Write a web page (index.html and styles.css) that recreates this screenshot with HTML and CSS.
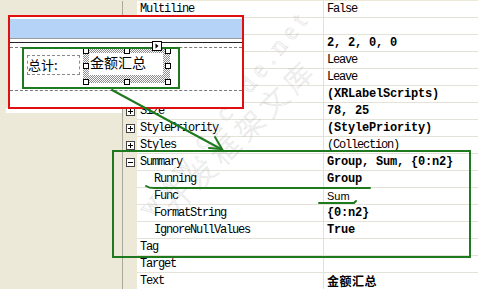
FILE: index.html
```html
<!DOCTYPE html>
<html>
<head>
<meta charset="utf-8">
<link rel="stylesheet" href="styles.css">
</head>
<body>
<div class="page">
  <div class="leftpane"></div>
  <div class="grid">
    <div class="row"><div class="gut"></div><div class="name">Multiline</div><div class="val">False</div></div>
    <div class="row"><div class="gut"></div><div class="name">NullValueText</div><div class="val"></div></div>
    <div class="row"><div class="gut"><svg class="pm" width="9" height="9"><rect x=".5" y=".5" width="8" height="8" fill="#fff" stroke="#444"/><path d="M2 4.5h5M4.5 2v5" stroke="#000"/></svg></div><div class="name">Padding</div><div class="val b">2, 2, 0, 0</div></div>
    <div class="row"><div class="gut"></div><div class="name">ProcessDuplicates</div><div class="val">Leave</div></div>
    <div class="row"><div class="gut"></div><div class="name">ProcessNullValues</div><div class="val">Leave</div></div>
    <div class="row"><div class="gut"><svg class="pm" width="9" height="9"><rect x=".5" y=".5" width="8" height="8" fill="#fff" stroke="#444"/><path d="M2 4.5h5M4.5 2v5" stroke="#000"/></svg></div><div class="name">Scripts</div><div class="val b">(XRLabelScripts)</div></div>
    <div class="row"><div class="gut"><svg class="pm" width="9" height="9"><rect x=".5" y=".5" width="8" height="8" fill="#fff" stroke="#444"/><path d="M2 4.5h5M4.5 2v5" stroke="#000"/></svg></div><div class="name">Size</div><div class="val b">78, 25</div></div>
    <div class="row"><div class="gut"><svg class="pm" width="9" height="9"><rect x=".5" y=".5" width="8" height="8" fill="#fff" stroke="#444"/><path d="M2 4.5h5M4.5 2v5" stroke="#000"/></svg></div><div class="name">StylePriority</div><div class="val b">(StylePriority)</div></div>
    <div class="row"><div class="gut"><svg class="pm" width="9" height="9"><rect x=".5" y=".5" width="8" height="8" fill="#fff" stroke="#444"/><path d="M2 4.5h5M4.5 2v5" stroke="#000"/></svg></div><div class="name">Styles</div><div class="val">(Collection)</div></div>
    <div class="row"><div class="gut"><svg class="pm" width="9" height="9"><rect x=".5" y=".5" width="8" height="8" fill="#fff" stroke="#444"/><path d="M2 4.5h5" stroke="#000"/></svg></div><div class="name">Summary</div><div class="val b">Group, Sum, {0:n2}</div></div>
    <div class="row"><div class="gut"></div><div class="name sub">Running</div><div class="val b">Group</div></div>
    <div class="row"><div class="gut"></div><div class="name sub">Func</div><div class="val sans">Sum</div></div>
    <div class="row"><div class="gut"></div><div class="name sub">FormatString</div><div class="val b">{0:n2}</div></div>
    <div class="row"><div class="gut"></div><div class="name sub">IgnoreNullValues</div><div class="val b">True</div></div>
    <div class="row"><div class="gut"></div><div class="name">Tag</div><div class="val"></div></div>
    <div class="row"><div class="gut"></div><div class="name">Target</div><div class="val"></div></div>
    <div class="row"><div class="gut"></div><div class="name">Text</div><div class="val b cjk">金额汇总</div></div>
  </div>

  <div class="watermark wm1">www.cncode.net</div>
  <div class="watermark wm2">开发框架文库</div>

  <div class="whitestrip"></div>
  <div class="paste">
    <div class="topwhite"></div>
    <div class="blueband"></div>
    <div class="line-gray"></div>
    <div class="line-black"></div>
    <div class="line-dash"></div>
    <div class="detail">
      <div class="lbl-total">总计:</div>
      <div class="sel">
        <div class="sel-inner">金额汇总</div>
      </div>
      <span class="h h1"></span><span class="h h2"></span><span class="h h3"></span>
      <span class="h h4"></span><span class="h h5"></span>
      <span class="h h6"></span><span class="h h7"></span><span class="h h8"></span>
      <div class="greenbox-small"></div>
    </div>
    <div class="line-dash"></div>
    <div class="smarttag"><svg width="10" height="10"><rect x=".5" y=".5" width="9" height="9" fill="#fff" stroke="#000"/><path d="M3.5 2.5l3 2.5-3 2.5z" fill="#000"/></svg></div>
  </div>

  <div class="greenbox-big"></div>
  <svg class="marks" width="478" height="289">
    <g stroke="#1f7a1f" fill="none" stroke-width="2" stroke-linecap="round">
      <path d="M112 90 L221 149"/>
      <path d="M215 137 L222 149 L209 148"/>
      <path d="M146 186 Q149 188 154 188 L370 188"/>
      <path d="M319 203 L354 203 L356 201"/>
    </g>
  </svg>
</div>
</body>
</html>
```

FILE: styles.css
```css
* { box-sizing: border-box; }
html, body { margin: 0; padding: 0; }
body {
  width: 478px;
  height: 289px;
  overflow: hidden;
  background: #ece9d8;
}
.page {
  position: relative;
  width: 478px;
  height: 289px;
  display: flex;
}
.leftpane {
  width: 122px;
  flex: none;
  background: #ece9d8;
}
.grid {
  flex: 1;
  padding-top: 1px;
  background: #ece9d8;
  font-family: "Liberation Mono", "DejaVu Sans Mono", monospace;
  font-size: 12px;
  color: #000;
}
.row {
  display: flex;
  height: 17px;
}
.gut {
  width: 15px;
  flex: none;
  border-left: 1px solid #aca899;
  background: #ece9d8;
  display: flex;
  align-items: center;
  padding-left: 3px;
}
.pm { display: block; }
.name {
  width: 186px;
  flex: none;
  background: #fff;
  border-bottom: 1px solid #e4e2d6;
  padding-left: 3px;
  line-height: 16px;
  letter-spacing: -1.2px;
  white-space: nowrap;
  overflow: hidden;
}
.name.sub { padding-left: 17px; }
.val {
  flex: 1;
  background: #fff;
  border-left: 1px solid #e4e2d6;
  border-bottom: 1px solid #e4e2d6;
  padding-left: 3px;
  line-height: 16px;
  letter-spacing: -1.2px;
  white-space: nowrap;
  overflow: hidden;
}
.val.b { font-weight: bold; letter-spacing: -0.2px; }
.val.sans {
  font-family: "Liberation Sans", Arial, sans-serif;
  font-size: 11px;
  letter-spacing: 0;
}
.val.cjk {
  font-family: "Noto Sans CJK SC", sans-serif;
  font-size: 12px;
  letter-spacing: 0.5px;
}

.watermark {
  position: absolute;
  color: rgba(210, 210, 210, 0.1);
  -webkit-text-stroke: 0.6px rgba(160, 160, 160, 0.3);
  white-space: nowrap;
  transform-origin: 0 0;
  pointer-events: none;
}
.wm1 {
  left: 132px; top: 203px;
  transform: rotate(-51deg);
  font-family: "Liberation Serif", serif;
  font-size: 26px;
  line-height: 30px;
  letter-spacing: 6px;
}
.wm2 {
  left: 156px; top: 196px;
  transform: rotate(-45deg);
  font-family: "Noto Sans CJK SC", sans-serif;
  font-weight: 300;
  font-size: 28px;
  line-height: 30px;
  letter-spacing: 6px;
}

.whitestrip {
  position: absolute;
  left: 6px; top: 108px;
  width: 116px; height: 5px;
  background: #fff;
}
.paste {
  position: absolute;
  left: 8px; top: 15px;
  width: 236px; height: 94px;
  border: 2px solid #e01010;
  background: #fff;
  display: flex;
  flex-direction: column;
}
.topwhite { height: 2px; flex: none; }
.blueband { height: 19px; flex: none; background: #b5d3f7; }
.line-gray { height: 1px; flex: none; background: #9a9a9a; margin-top: 0; }
.line-black { height: 1px; flex: none; background: #222; margin-top: 3px; }
.line-dash { height: 0; flex: none; border-top: 1px dashed #7a7a7a; margin-top: 4px; }
.detail {
  position: relative;
  height: 42px;
  flex: none;
}
.detail + .line-dash { margin-top: 0; }
.lbl-total {
  position: absolute;
  left: 17px; top: 7px;
  width: 53px; height: 20px;
  border: 1px dashed #8a8a8a;
  font-family: "Noto Sans CJK SC", sans-serif;
  font-size: 13px;
  line-height: 17px;
  padding-left: 0;
  color: #000;
}
.sel {
  position: absolute;
  left: 73px; top: 1px;
  width: 87px; height: 34px;
  background: repeating-conic-gradient(#8c8c8c 0 25%, #fff 0 50%) 0 0 / 2px 2px;
  padding: 4px 7px 8px 6px;
}
.sel-inner {
  background: #fff;
  height: 100%;
  font-family: "Noto Sans CJK SC", sans-serif;
  font-size: 14px;
  line-height: 18px;
  padding-left: 1px;
  color: #000;
  white-space: nowrap;
}
.h {
  position: absolute;
  width: 6px; height: 6px;
  background: #fff;
  border: 1px solid #000;
}
.h1 { left: 73px; top: 0; }
.h2 { left: 114px; top: 0; }
.h3 { left: 155px; top: 0; }
.h4 { left: 73px; top: 15px; }
.h5 { left: 155px; top: 15px; }
.h6 { left: 73px; top: 31px; }
.h7 { left: 114px; top: 31px; }
.h8 { left: 155px; top: 31px; }
.greenbox-small {
  position: absolute;
  left: 12px; top: -1px;
  width: 158px; height: 42px;
  border: 2px solid #1f7a1f;
}
.smarttag {
  position: absolute;
  left: 142px; top: 24px;
  width: 10px; height: 10px;
}
.smarttag svg { display: block; }

.greenbox-big {
  position: absolute;
  left: 112px; top: 150px;
  width: 359px; height: 108px;
  border: 2px solid #1f7a1f;
  pointer-events: none;
}
.marks {
  position: absolute;
  left: 0; top: 0;
  pointer-events: none;
}
```
